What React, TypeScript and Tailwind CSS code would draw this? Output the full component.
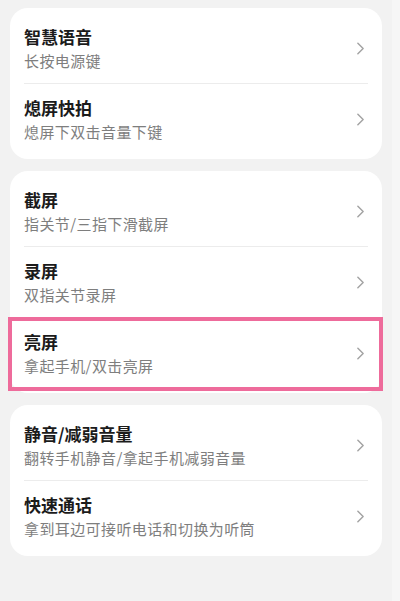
import { ChevronRight } from "lucide-react";

type Item = {
    title: string;
    desc: string;
    active?: boolean;
};

const groups: Item[][] = [
    [
        { title: "智慧语音", desc: "长按电源键" },
        { title: "熄屏快拍", desc: "熄屏下双击音量下键" },
    ],
    [
        { title: "截屏", desc: "指关节/三指下滑截屏" },
        { title: "录屏", desc: "双指关节录屏" },
        { title: "亮屏", desc: "拿起手机/双击亮屏", active: true },
    ],
    [
        { title: "静音/减弱音量", desc: "翻转手机静音/拿起手机减弱音量" },
        { title: "快速通话", desc: "拿到耳边可接听电话和切换为听筒" },
    ],
];

function Row({ item, last }: { item: Item; last: boolean }) {
    return (
        <div className="relative flex h-[71px] items-center pl-[14px] pr-[11px]">
            <div className="flex flex-1 flex-col">
                <span className="text-[17px] leading-[24px] font-bold text-[#1b1b1b]">{item.title}</span>
                <span className="text-[15px] leading-[24px] tracking-[0.4px] text-[#7e7e7e]">{item.desc}</span>
            </div>
            <ChevronRight size={21} strokeWidth={1.7} className="text-[#a3a3a3]" />
            {!last && (
                <div className="absolute bottom-0 left-[14px] right-[14px] h-px bg-[#ececec]" />
            )}
            {/* highlight frame */}
            {item.active && (
                <div className="absolute -left-[2px] -right-[1px] -top-[1px] -bottom-[2px] border-[4px] border-[#ee6b9b]" />
            )}
        </div>
    );
}

export default function App() {
    return (
        <div
            className="flex h-[601px] w-[400px] bg-[#f2f2f2]"
            style={{ fontFamily: '"Noto Sans CJK SC", "Noto Sans", sans-serif' }}
        >
            <div className="flex w-[392px] flex-col gap-[12px] pl-[10px] pr-[10px] pt-[8px]">
                {groups.map((group, gi) => (
                    <div key={gi} className="rounded-[18px] bg-white pt-[5px] pb-[4px]">
                        {group.map((item, i) => (
                            <Row key={item.title} item={item} last={i === group.length - 1} />
                        ))}
                    </div>
                ))}
            </div>
            <div className="flex-1 bg-[#f6f6f6]" />
        </div>
    );
}
